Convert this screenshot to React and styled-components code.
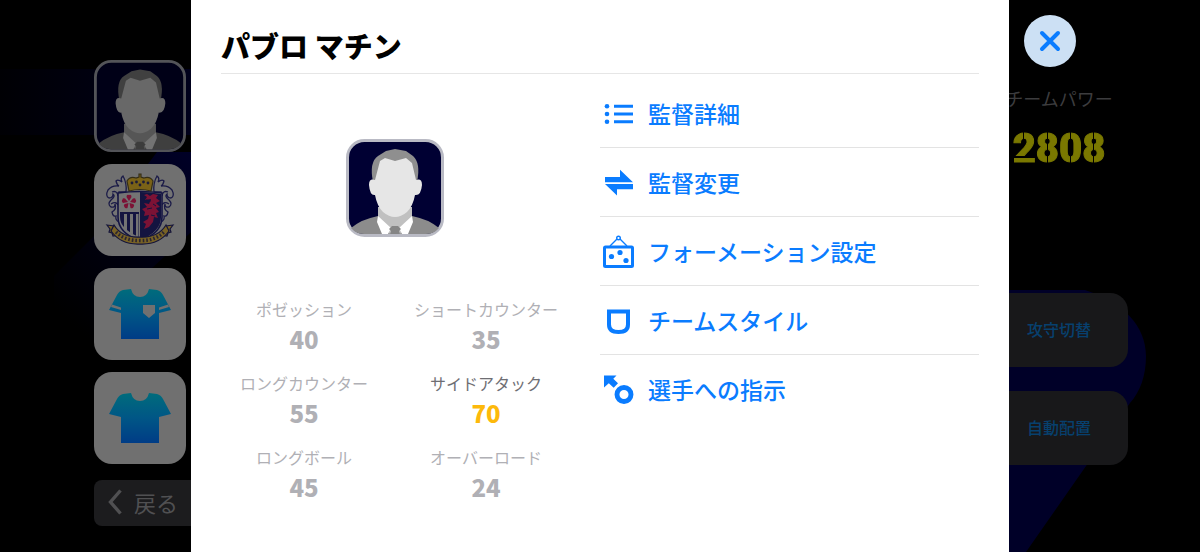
import React from 'react';
import styled, { createGlobalStyle } from 'styled-components';

const stats = [
    { label: 'ポゼッション', value: 40 },
    { label: 'ショートカウンター', value: 35 },
    { label: 'ロングカウンター', value: 55 },
    { label: 'サイドアタック', value: 70, best: true },
    { label: 'ロングボール', value: 45 },
    { label: 'オーバーロード', value: 24 },
];

const menu = [
    { label: '監督詳細', icon: <ListIcon/> },
    { label: '監督変更', icon: <SwapIcon/> },
    { label: 'フォーメーション設定', icon: <BoardIcon/> },
    { label: 'チームスタイル', icon: <StyleIcon/> },
    { label: '選手への指示', icon: <OrderIcon/> },
];

const App=()=>{
    return(
        <Page>
            <GlobalStyle/>
            <Backdrop/>
            <LeftSide>
                <Tile aria-label="監督" $plain><Manager/></Tile>
                <Tile aria-label="エンブレム"><Crest/></Tile>
                <Tile aria-label="ユニフォーム"><Shirt id="kit" badge/></Tile>
                <Tile aria-label="シャツ"><Shirt id="shirt"/></Tile>
                <BackButton>
                    <svg width="14" height="26" viewBox="0 0 14 26" fill="none" stroke="currentColor" strokeWidth="3.4">
                        <path d="M12.5 1.5 2.5 13l10 11.5"/>
                    </svg>
                    戻る
                </BackButton>
            </LeftSide>

            <Dialog role="dialog" aria-labelledby="managerName">
                <Title id="managerName">パブロ マチン</Title>
                <Body>
                    <Profile>
                        <Portrait><Manager/></Portrait>
                        <Stats>
                            {stats.map((s)=>(
                                <Stat key={s.label}>
                                    <StatLabel $best={s.best}>{s.label}</StatLabel>
                                    <StatValue $best={s.best}>{s.value}</StatValue>
                                </Stat>
                            ))}
                        </Stats>
                    </Profile>
                    <Menu>
                        {menu.map((m)=>(
                            <MenuItem key={m.label}>
                                <MenuButton>{m.icon}{m.label}</MenuButton>
                            </MenuItem>
                        ))}
                    </Menu>
                </Body>
            </Dialog>

            <RightSide>
                <CloseButton aria-label="閉じる">
                    <svg width="22" height="22" viewBox="0 0 22 22" stroke="#0a7cff" strokeWidth="4" strokeLinecap="round">
                        <path d="M3 3l16 16M19 3 3 19"/>
                    </svg>
                </CloseButton>
                <PowerLabel>チームパワー</PowerLabel>
                <Power><Two>2</Two><Digit>8</Digit><Digit>0</Digit><Digit>8</Digit></Power>
                <SideButton>攻守切替</SideButton>
                <SideButton>自動配置</SideButton>
            </RightSide>
        </Page>
    );
}

export default App;

function ListIcon(){
    return(
        <svg width="38" height="38" viewBox="0 0 38 38" fill="currentColor">
            <circle cx="7" cy="12.3" r="2.3"/><circle cx="7" cy="20" r="2.3"/><circle cx="7" cy="27.7" r="2.3"/>
            <path d="M14 10.8h19v3H14zM14 18.5h19v3H14zM14 26.2h19v3H14z"/>
        </svg>
    );
}

function SwapIcon(){
    return(
        <svg width="38" height="38" viewBox="0 0 38 38" fill="currentColor">
            <path d="M5 19.3v-5.300h15V6.800l13 12.500z"/>
            <path d="M33 21v5.200H17v6.300L5 21z"/>
        </svg>
    );
}

function BoardIcon(){
    return(
        <svg width="38" height="38" viewBox="0 0 38 38" fill="none" stroke="currentColor">
            <rect x="4.5" y="15" width="28" height="19.500" rx="1" strokeWidth="3"/>
            <path d="M10 14l7-7M27 14l-7-7" strokeWidth="1.4"/>
            <circle cx="18.500" cy="6" r="1.8" strokeWidth="1.4"/>
            <g fill="currentColor" stroke="none">
                <circle cx="11.500" cy="24.500" r="2.6"/><circle cx="20" cy="20.500" r="2.6"/><circle cx="26" cy="28.500" r="2.6"/>
            </g>
        </svg>
    );
}

function StyleIcon(){
    return(
        <svg width="38" height="38" viewBox="0 0 38 38" fill="none" stroke="currentColor" strokeWidth="4">
            <path d="M9 10.500h19v13q0 7.500-9.500 7.500T9 23.500z"/>
        </svg>
    );
}

function OrderIcon(){
    return(
        <svg width="38" height="38" viewBox="0 0 38 38" fill="currentColor">
            <path d="M4 5.500h12.500l-3.200 3.300 4.700 4.500-4.300 4.500-4.900-4.500L4 17.500z"/>
            <circle cx="24" cy="24.500" r="7" fill="none" stroke="currentColor" strokeWidth="4.900"/>
        </svg>
    );
}

function Manager(){
    return(
        <svg width="100%" height="100%" viewBox="0 0 98 98">
            <rect x="1.500" y="1.500" width="95" height="95" rx="17" fill="#000033" stroke="#b9bac4" strokeWidth="3"/>
            <path d="M5 89q11-9 27-12h34q16 3 27 12-5 6-13 6H18q-8 0-13-6z" fill="#8c8c8c"/>
            <path d="M32 68h34v12L54 95H44L32 80z" fill="#c0c0c0"/>
            <path d="M32 77l13 12-3 6h-6l-5-12zM66 77 53 89l3 6h6l5-12z" fill="#fff"/>
            <path d="M46 87h6l3 3-2 2 1 3H44l1-3-2-2z" fill="#858585"/>
            <path d="M27 43q-4-20 5-26l8-5 9-2 11 2 7 5q8 7 4 26z" fill="#8f8f8f"/>
            <path d="M29 41q-6-2-6 5 1 11 6 10 2 11 8 17 12 10 24 0 6-6 8-17 6 1 7-10 0-7-6-5l-4-17-6-5-11 3-10-3-5 3z" fill="#e6e6e6"/>
        </svg>
    );
}

function Shirt({ id, badge }){
    return(
        <svg width="62" height="52" viewBox="0 0 62 52">
            <defs>
                <linearGradient id={id} x1="0" y1="0" x2="0" y2="1">
                    <stop offset="0" stopColor="#006c7c"/>
                    <stop offset="0.5" stopColor="#005686"/>
                    <stop offset="1" stopColor="#003c86"/>
                </linearGradient>
            </defs>
            <path d="M14 2l8-1q2 8 9 8t9-8l8 1q4 1 6 5l8 15-12 3v26H12V25L0 22 8 7q2-4 6-5z" fill={`url(#${id})`}/>
            {badge && <path d="M3 16.500l9 3v2.500L2 19zM59 16.500l-9 3v2.500l10-3zM34 17h12v8l-6 5-6-5z" fill="#707070"/>}
        </svg>
    );
}

function Crest(){
    return(
        <svg width="74" height="76" viewBox="0 0 74 76">
            <g fill="#747474" stroke="#1c1c48" strokeWidth="1.300">
                <path d="M23 20q1-9-3-16-3 2-1 6-4-3-6-1 1 4 3 5-7-1-11 4-3 6 1 8 4 0 4-4 3 2-2 6-4 4 0 7 4 1 4-3 2 5-3 8 1 5 4 4-1 4 3 6V20z"/>
                <path d="M51 20q-1-9 3-16 3 2 1 6 4-3 6-1-1 4-3 5 7-1 11 4 3 6-1 8-4 0-4-4-3 2 2 6 4 4 0 7-4 1-4-3-2 5 3 8-1 5-4 4 1 4-3 6V20z"/>
                <path d="M9 20q5-2 6 4M8 32q5-3 7 1M65 20q-5-2-6 4M66 32q-5-3-7 1" fill="none"/>
            </g>
            <path d="M15 21q22-3 44 0v24q0 16-22 24-22-8-22-24z" fill="#747474" stroke="#141444" strokeWidth="1.600"/>
            <path d="M37 20q11 0 21 2v23q0 15-21 23z" fill="#141440"/>
            <path d="M17 40h19v25q-19-8-19-20z" fill="#141440"/>
            <path d="M21 42h3v18l-3-3zM27 42h3v21l-3-2zM33 42h2.500v23l-2.500-1z" fill="#747474"/>
            <g fill="#7c1235">
                <path d="M26 29l-2.500-4q0-3 2.500-2 2.500-1 2.500 2zM25 30l-5 1q-2-2-.5-3.500 0-2 2.500-1zM27 30l5 1q2-2 .5-3.500 0-2-2.500-1zM25.500 31l-1 5q-2.500 1-3-1-1.500-2 .5-3zM26.500 31l1 5q2.500 1 3-1 1.500-2-.5-3z"/>
                <path d="M41 24l3-2 3 2 3-2 5 1-2 3 4 3-4 2 4 4-4 1 3 4-3 1 2 5-4-1-1 5-4 5-5 2 2-5-3-2 5-3 1-4-5 1 1-4-3-3 5-2-3-4 5 1 2-5-6 1 2-3-3-2 3-1z"/>
            </g>
            <path d="M43 28l5 1M44 37l5-1M48 43l4 1M50 32l3 2" fill="none" stroke="#141440" strokeWidth="1"/>
            <path d="M26 19l-2-10q3-5 9-3l3-1V2h2v3l3 1q6-2 9 3l-2 10q-11-3-22 0z" fill="#7a6217" stroke="#342d17" strokeWidth="1.200"/>
            <g fill="#1c1c38"><circle cx="29" cy="11" r="1.400"/><circle cx="33.500" cy="10" r="1.400"/><circle cx="37" cy="13" r="1.400"/><circle cx="40.500" cy="10" r="1.400"/><circle cx="45" cy="11" r="1.400"/></g>
            <g fill="#786225" stroke="#15153a" strokeWidth="1.200">
                <path d="M4 53l7 1 5 9-6 1-1-3-3-1 1-3zM70 53l-7 1-5 9 6 1 1-3 3-1-1-3z"/>
                <path d="M11 53q8 13 26 12 18 1 26-12l3 6q-10 14-29 13Q18 73 8 59z"/>
            </g>
            <path d="M13 60q9 9 24 8.500 15 .5 24-8.500" fill="none" stroke="#2b2530" strokeWidth="3.400" strokeDasharray="1.600 2"/>
        </svg>
    );
}

function Backdrop(){
    return(
        <Scene viewBox="0 0 1200 552" preserveAspectRatio="none" aria-hidden="true">
            <defs>
                <linearGradient id="band" x1="0" y1="0" x2="1" y2="0">
                    <stop offset="0" stopColor="#000004"/>
                    <stop offset="1" stopColor="#00001c"/>
                </linearGradient>
                <linearGradient id="fade" x1="1" y1="0" x2="0.300" y2="1">
                    <stop offset="0" stopColor="#000028"/>
                    <stop offset="0.600" stopColor="#00000e"/>
                    <stop offset="1" stopColor="#000000"/>
                </linearGradient>
            </defs>
            <path d="M0 69h200v66H0z" fill="url(#band)"/>
            <path d="M157 152h43v72l-48 44v80H54v-72l40-40z" fill="url(#fade)"/>
            <path d="M1000 290h85c38 12 61 36 61 66 0 20-6 36-16 47l-104 149h-26z" fill="#000028"/>
        </Scene>
    );
}

const GlobalStyle = createGlobalStyle`
    *{
        box-sizing:border-box;
    }
    body{
        margin:0;
        background:#000;
        font-family:"Noto Sans CJK JP", sans-serif;
    }
    button{
        border:0;
        padding:0;
        font-family:inherit;
        cursor:pointer;
    }
    svg{
        display:block;
    }
    `
const Page = styled.div`
    display:grid;
    grid-template-columns:minmax(0, 1fr) minmax(0, 818px) minmax(0, 1fr);
    min-height:100vh;
    overflow:hidden;
    position:relative;
    `
const Scene = styled.svg`
    position:absolute;
    inset:0;
    width:100%;
    height:100%;
    `
const LeftSide = styled.nav`
    display:flex;
    flex-direction:column;
    align-items:flex-end;
    gap:12px;
    padding:60px 5px 0 0;
    position:relative;
    `
const Tile = styled.button`
    display:flex;
    align-items:center;
    justify-content:center;
    width:92px;
    height:92px;
    border-radius:18px;
    background:${(p)=>p.$plain ? 'none' : '#707070'};
    filter:${(p)=>p.$plain ? 'brightness(0.45)' : 'none'};
    `
const BackButton = styled.button`
    display:flex;
    align-items:center;
    gap:12px;
    width:97px;
    height:46px;
    margin:4px -5px 0 0;
    padding:0 0 2px 14px;
    border-radius:8px 0 0 8px;
    background:#1c1c1e;
    color:#505052;
    font-size:22px;
    white-space:nowrap;
    `
const Dialog = styled.main`
    position:relative;
    z-index:1;
    background:#fff;
    padding:25px 30px 0;
    `
const Title = styled.h1`
    margin:0;
    padding-bottom:8px;
    border-bottom:1px solid #e6e6e6;
    font-size:29px;
    line-height:40px;
    font-weight:900;
    color:#000;
    `
const Body = styled.div`
    display:grid;
    grid-template-columns:1fr 1fr;
    `
const Profile = styled.section`
    display:flex;
    flex-direction:column;
    align-items:center;
    gap:60px;
    padding:65px 31px 0 0;
    `
const Portrait = styled.div`
    width:98px;
    height:98px;
    `
const Stats = styled.dl`
    display:grid;
    grid-template-columns:1fr 1fr;
    gap:14px 16px;
    width:100%;
    margin:0;
    text-align:center;
    `
const Stat = styled.div`
    white-space:nowrap;
    `
const StatLabel = styled.dt`
    font-size:16px;
    line-height:24px;
    color:${(p)=>p.$best ? '#6e6e73' : '#b0b0b5'};
    `
const StatValue = styled.dd`
    margin:0;
    font-size:24px;
    line-height:36px;
    font-weight:900;
    color:${(p)=>p.$best ? '#fdb90b' : '#b0b0b5'};
    `
const Menu = styled.ul`
    list-style:none;
    margin:0;
    padding:5px 0 0;
    `
const MenuItem = styled.li`
    border-bottom:1px solid #e3e3e3;
    &:last-child{
        border-bottom:0;
    }
    `
const MenuButton = styled.button`
    display:flex;
    align-items:center;
    gap:10px;
    width:100%;
    height:68px;
    background:none;
    color:#0a7cff;
    font-size:23px;
    font-weight:500;
    white-space:nowrap;
    `
const RightSide = styled.aside`
    display:flex;
    flex-direction:column;
    align-items:center;
    width:138px;
    margin-left:-19px;
    padding-top:15px;
    position:relative;
    `
const CloseButton = styled.button`
    display:flex;
    align-items:center;
    justify-content:center;
    width:52px;
    height:52px;
    margin-right:18px;
    border-radius:50%;
    background:#cce0f4;
    `
const PowerLabel = styled.div`
    margin-top:18px;
    font-size:18px;
    line-height:26px;
    color:#3c3c3e;
    white-space:nowrap;
    `
const Power = styled.div`
    display:flex;
    margin:14px 0 120px;
    font-family:Roboto, sans-serif;
    font-size:40px;
    line-height:48px;
    font-weight:900;
    `
// stencil digits: the glyph is filled by a gradient with a gap in it
const Digit = styled.span`
    color:transparent;
    -webkit-text-stroke:1px transparent;
    background:linear-gradient(to right, #7a7800 46%, transparent 46% 54%, #7a7800 54%);
    background-clip:text;
    -webkit-background-clip:text;
    `
const Two = styled(Digit)`
    background:
        linear-gradient(to right, #7a7800 42%, transparent 42% 50%, #7a7800 50%) top / 100% 18px no-repeat,
        linear-gradient(#7a7800 13px, transparent 13px 15px, #7a7800 15px) 0 18px / 100% 30px no-repeat;
    background-clip:text;
    -webkit-background-clip:text;
    `
const SideButton = styled.button`
    width:138px;
    height:74px;
    margin-bottom:24px;
    padding-bottom:2px;
    border-radius:18px;
    background:#18181a;
    color:#07406e;
    font-size:16px;
    font-weight:500;
    `
